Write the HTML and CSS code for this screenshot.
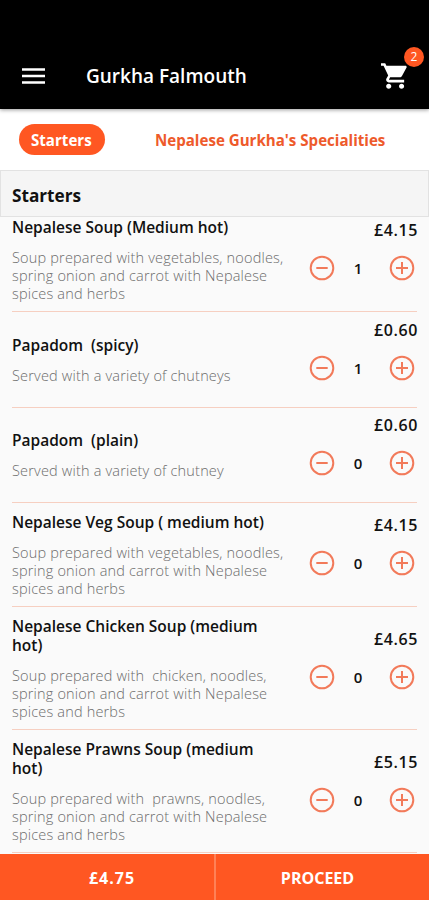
FILE: index.html
```html
<!DOCTYPE html>
<html lang="en">
<head>
  <meta charset="UTF-8">
  <meta name="viewport" content="width=device-width, initial-scale=1">
  <title>Gurkha Falmouth</title>
  <link rel="stylesheet" href="styles.css">
</head>
<body>

  <!-- shared icons -->
  <svg class="icon-defs" aria-hidden="true">
    <symbol id="minus" viewBox="0 0 26 26">
      <circle cx="13" cy="13" r="11.3"/>
      <path d="M7.3 13h11.4"/>
    </symbol>
    <symbol id="plus" viewBox="0 0 26 26">
      <circle cx="13" cy="13" r="11.3"/>
      <path d="M7 13h12M13 7v12"/>
    </symbol>
  </svg>

  <header class="app-bar">
    <svg class="menu-icon" viewBox="0 0 23 16"><path d="M0 1.5h23M0 8h23M0 14.5h23"/></svg>
    <h1>Gurkha Falmouth</h1>
    <div class="cart">
      <svg class="cart-icon" viewBox="1 2 21 20"><path d="M7 18c-1.100 0-1.990.9-1.990 2S5.900 22 7 22s2-.9 2-2-.9-2-2-2zM1 2v2h2l3.600 7.590-1.350 2.450c-.16.280-.25.610-.25.960 0 1.100.9 2 2 2h12v-2H7.420c-.14 0-.25-.11-.25-.25l.03-.12.9-1.630h7.450c.75 0 1.410-.41 1.750-1.030l3.580-6.490c.08-.14.120-.31.120-.48 0-.55-.45-1-1-1H5.210l-.94-2H1zm16 16c-1.100 0-1.990.9-1.990 2s.89 2 1.990 2 2-.9 2-2-.9-2-2-2z"/></svg>
      <span class="badge">2</span>
    </div>
  </header>

  <nav class="tabs">
    <a class="tab active" href="#starters">Starters</a>
    <a class="tab" href="#specialities">Nepalese Gurkha's Specialities</a>
  </nav>

  <h2 class="section-title" id="starters">Starters</h2>

  <main class="menu">
    <div class="item">
      <div class="info">
        <h3>Nepalese Soup (Medium hot)</h3>
        <p>Soup prepared with vegetables, noodles,<br>spring onion and carrot with Nepalese<br>spices and herbs</p>
      </div>
      <div class="order">
        <span class="price">£4.15</span>
        <div class="qty">
          <svg><use href="#minus"/></svg>
          <span>1</span>
          <svg><use href="#plus"/></svg>
        </div>
      </div>
    </div>

    <div class="item">
      <div class="info">
        <h3>Papadom&nbsp; (spicy)</h3>
        <p>Served with a variety of chutneys</p>
      </div>
      <div class="order">
        <span class="price">£0.60</span>
        <div class="qty">
          <svg><use href="#minus"/></svg>
          <span>1</span>
          <svg><use href="#plus"/></svg>
        </div>
      </div>
    </div>

    <div class="item">
      <div class="info">
        <h3>Papadom&nbsp; (plain)</h3>
        <p>Served with a variety of chutney</p>
      </div>
      <div class="order">
        <span class="price">£0.60</span>
        <div class="qty">
          <svg><use href="#minus"/></svg>
          <span>0</span>
          <svg><use href="#plus"/></svg>
        </div>
      </div>
    </div>

    <div class="item">
      <div class="info">
        <h3>Nepalese Veg Soup ( medium hot)</h3>
        <p>Soup prepared with vegetables, noodles,<br>spring onion and carrot with Nepalese<br>spices and herbs</p>
      </div>
      <div class="order">
        <span class="price">£4.15</span>
        <div class="qty">
          <svg><use href="#minus"/></svg>
          <span>0</span>
          <svg><use href="#plus"/></svg>
        </div>
      </div>
    </div>

    <div class="item">
      <div class="info">
        <h3>Nepalese Chicken Soup (medium<br>hot)</h3>
        <p>Soup prepared with&nbsp; chicken, noodles,<br>spring onion and carrot with Nepalese<br>spices and herbs</p>
      </div>
      <div class="order">
        <span class="price">£4.65</span>
        <div class="qty">
          <svg><use href="#minus"/></svg>
          <span>0</span>
          <svg><use href="#plus"/></svg>
        </div>
      </div>
    </div>

    <div class="item">
      <div class="info">
        <h3>Nepalese Prawns Soup (medium<br>hot)</h3>
        <p>Soup prepared with&nbsp; prawns, noodles,<br>spring onion and carrot with Nepalese<br>spices and herbs</p>
      </div>
      <div class="order">
        <span class="price">£5.15</span>
        <div class="qty">
          <svg><use href="#minus"/></svg>
          <span>0</span>
          <svg><use href="#plus"/></svg>
        </div>
      </div>
    </div>
  </main>

  <footer class="checkout">
    <div class="total">£4.75</div>
    <div class="proceed">PROCEED</div>
  </footer>

</body>
</html>
```
FILE: styles.css
```css
* {
  box-sizing: border-box;
}
body {
  margin: 0;
  height: 900px;
  display: flex;
  flex-direction: column;
  overflow: hidden;
  font-family: "Open Sans", "Noto Sans", sans-serif;
  background: #fafafa;
  color: #111;
}
h1, h2, h3, p {
  margin: 0;
}
.icon-defs {
  display: none;
}

/* top bar */
.app-bar {
  flex: none;
  height: 109px;
  padding: 43px 21px 0 22px;
  display: flex;
  align-items: center;
  background: #000;
  color: #fff;
  box-shadow: 0 1px 4px rgba(0,0,0,0.4);
  z-index: 2;
}
.menu-icon {
  width: 23px;
  height: 16px;
  stroke: #fff;
  stroke-width: 2.4;
}
.app-bar h1 {
  margin-left: 41px;
  flex: 1;
  font-size: 19px;
  line-height: 26px;
  font-weight: 600;
}
.cart {
  position: relative;
  height: 26px;
}
.cart-icon {
  display: block;
  width: 27px;
  height: 26px;
  fill: #fff;
}
.badge {
  position: absolute;
  top: -16px;
  right: -16px;
  width: 20px;
  height: 20px;
  border-radius: 50%;
  background: #ff5722;
  font-size: 12px;
  line-height: 20px;
  text-align: center;
}

/* category tabs */
.tabs {
  flex: none;
  height: 61px;
  padding-left: 19px;
  display: flex;
  align-items: center;
  gap: 38px;
  background: #fff;
}
.tab {
  padding: 0 12px;
  height: 31px;
  border-radius: 16px;
  line-height: 32px;
  font-size: 15.100px;
  font-weight: 700;
  color: #ee5a2b;
  text-decoration: none;
  white-space: nowrap;
}
.tab.active {
  width: 86px;
  background: #ff5722;
  color: #fff;
}

.section-title {
  flex: none;
  height: 47px;
  padding-left: 11px;
  border: 1px solid #e2e2e2;
  background: #f5f5f5;
  font-size: 17.200px;
  line-height: 49px;
  font-weight: 700;
  z-index: 1;
}

/* menu list, first row is scrolled under the title */
.menu {
  flex: 1;
  min-height: 0;
  margin-top: -9px;
  padding: 0 12px;
  overflow: hidden;
}
.item {
  min-height: 95.500px;
  padding: 10px 0 8px;
  display: flex;
  justify-content: space-between;
  align-items: center;
  border-bottom: 1px solid #f6cfc1;
}
.info {
  white-space: nowrap;
}
.info h3 {
  font-size: 15.500px;
  line-height: 19px;
  font-weight: 600;
}
.info p {
  margin-top: 12px;
  font-size: 14.500px;
  line-height: 18px;
  font-weight: 300;
  letter-spacing: 0.180px;
  color: #6c6c6c;
}
.order {
  width: 108px;
  margin: -10px 0 -8px;
  padding-bottom: 18px;
  display: flex;
  flex-direction: column;
  align-items: flex-end;
  gap: 15px;
}
.price {
  margin-right: -1px;
  font-size: 16px;
  line-height: 20px;
  font-weight: 600;
  letter-spacing: 0.600px;
}
.qty {
  width: 108px;
  padding-right: 2px;
  display: flex;
  align-items: center;
  font-size: 15px;
  line-height: 26px;
  font-weight: 600;
}
.qty span {
  flex: 1;
  padding-right: 8px;
  text-align: center;
}
.qty svg {
  width: 26px;
  height: 26px;
  fill: none;
  stroke: #f27a5a;
  stroke-width: 2;
}

/* bottom bar */
.checkout {
  flex: none;
  height: 46px;
  display: flex;
  background: #ff5722;
  color: #fff;
  font-size: 16px;
  line-height: 48px;
  font-weight: 700;
  text-align: center;
  z-index: 1;
}
.total {
  width: 216px;
  padding-left: 10px;
  border-right: 2px solid #ff8157;
  letter-spacing: 1px;
}
.proceed {
  flex: 1;
  padding-right: 10px;
}
```
